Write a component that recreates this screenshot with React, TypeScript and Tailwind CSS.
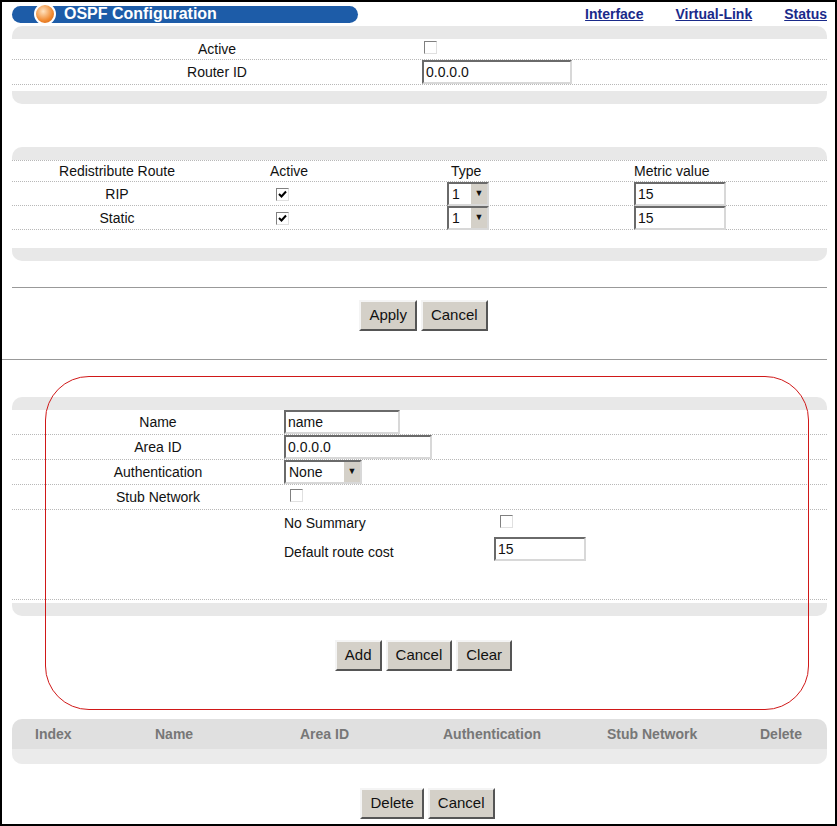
import React from "react";

const dot = "border-b border-dotted border-[#b8b8b8]";

function Check({ on }: { on?: boolean }) {
  return (
    <span className="inline-flex w-[13px] h-[13px] items-center justify-center border border-[#808080] border-r-[#e0e0e0] border-b-[#e0e0e0] bg-white">
      {on ? (
        <svg width="9" height="9" viewBox="0 0 9 9">
          <path d="M1 4 L3.5 6.5 L8 1.5" stroke="#000" strokeWidth="2" fill="none" />
        </svg>
      ) : null}
    </span>
  );
}

function Input({ value, w }: { value: string; w: string }) {
  return (
    <span className={`inline-flex h-[24px] items-center px-[2px] border-2 border-[#6a6a6a] border-r-[#d8d8d8] border-b-[#d8d8d8] bg-white text-[14px] ${w}`}>
      {value}
    </span>
  );
}

function Select({ value, w }: { value: string; w: string }) {
  return (
    <span className={`inline-flex h-[24px] items-center border-2 border-[#6a6a6a] border-r-[#d8d8d8] border-b-[#d8d8d8] bg-white text-[14px] ${w}`}>
      <span className="flex-1 px-[3px]">{value}</span>
      <span className="w-[17px] h-full flex items-center justify-center bg-[#d4d0c8] border-l border-[#fff] text-[9px]">▼</span>
    </span>
  );
}

function Btn({ label }: { label: string }) {
  return (
    <span className="inline-flex h-[31px] items-center px-[8px] bg-[#d4d0c8] border-2 border-[#f4f4f4] border-r-[#555] border-b-[#555] text-[15px]">
      {label}
    </span>
  );
}

function Band({ top }: { top?: boolean }) {
  return <div className={`h-[13px] bg-[#e8e8e8] ${top ? "rounded-t-[10px]" : "rounded-b-[10px]"}`} />;
}

export default function App() {
  return (
    <div className="w-[837px] h-[826px] border-2 border-black bg-white relative text-[14px] text-[#111]" style={{ fontFamily: "'Liberation Sans', Arial, sans-serif" }}>
      {/* title bar */}
      <div className="flex items-center h-[24px] pl-[10px] pr-[8px]">
        <div className="w-[346px] h-[17px] rounded-full bg-[#1d5ca8] flex items-center pl-[22px] gap-[8px]">
          <span className="w-[22px] h-[22px] rounded-full bg-[radial-gradient(circle_at_40%_35%,#ffe3c0,#f0882e_60%,#c85a10)] border-2 border-white" />
          <span className="text-white font-bold text-[16px]">OSPF Configuration</span>
        </div>
        <div className="flex-1 flex justify-end gap-[24px] font-bold text-[14px] text-[#1a2a8a] underline">
          <span className="mr-[8px]">Interface</span>
          <span className="mr-[8px]">Virtual-Link</span>
          <span>Status</span>
        </div>
      </div>

      <div className="pl-[10px] pr-[8px]">
        <Band top />
        <div className={`grid grid-cols-[410px_1fr] h-[21px] items-center ${dot}`}>
          <span className="text-center">Active</span>
          <span className="pl-[2px]"><Check /></span>
        </div>
        <div className={`grid grid-cols-[410px_1fr] h-[25px] items-center ${dot}`}>
          <span className="text-center">Router ID</span>
          <span><Input value="0.0.0.0" w="w-[150px]" /></span>
        </div>
        <div className="h-[6px]" />
        <Band />

        <div className="h-[43px]" />
        <Band top />
        <div className={`grid grid-cols-[210px_125px_235px_1fr] h-[22px] items-center border-t border-dotted border-[#b8b8b8] ${dot}`}>
          <span className="text-center">Redistribute Route</span>
          <span className="pl-[48px]">Active</span>
          <span className="pl-[104px]">Type</span>
          <span className="pl-[52px]">Metric value</span>
        </div>
        {["RIP", "Static"].map((r) => (
          <div key={r} className={`grid grid-cols-[210px_125px_235px_1fr] h-[24px] items-center ${dot}`}>
            <span className="text-center">{r}</span>
            <span className="pl-[54px]"><Check on /></span>
            <span className="pl-[100px]"><Select value="1" w="w-[42px]" /></span>
            <span className="pl-[52px]"><Input value="15" w="w-[92px]" /></span>
          </div>
        ))}
        <div className="h-[18px]" />
        <Band />
      </div>

      <div className="h-[26px]" />
      <div className="ml-[10px] mr-[8px] border-t border-[#999]" />
      <div className="flex justify-center gap-[4px] pl-[10px] mt-[12px]">
        <Btn label="Apply" />
        <Btn label="Cancel" />
      </div>
      <div className="h-[28px]" />
      <div className="mr-[8px] border-t border-[#999]" />

      <div className="h-[37px]" />
      <div className="pl-[10px] pr-[8px]">
        <Band top />
        {[
          ["Name", <Input value="name" w="w-[116px]" />],
          ["Area ID", <Input value="0.0.0.0" w="w-[148px]" />],
          ["Authentication", <Select value="None" w="w-[78px]" />],
          ["Stub Network", <Check />],
        ].map(([l, c], i) => (
          <div key={i} className={`grid grid-cols-[272px_1fr] h-[25px] items-center ${dot}`}>
            <span className="text-center pl-[20px]">{l}</span>
            <span className={i === 3 ? "pl-[6px]" : ""}>{c}</span>
          </div>
        ))}
        <div className="grid grid-cols-[272px_210px_1fr] h-[27px] items-center">
          <span />
          <span>No Summary</span>
          <span className="pl-[6px]"><Check /></span>
        </div>
        <div className={`grid grid-cols-[272px_210px_1fr] h-[63px] items-start ${dot}`}>
          <span />
          <span className="pt-[5px]">Default route cost</span>
          <span><Input value="15" w="w-[92px]" /></span>
        </div>
        <div className="h-[3px]" />
        <Band />
      </div>
      <div className="flex justify-center gap-[4px] pl-[10px] mt-[24px]">
        <Btn label="Add" />
        <Btn label="Cancel" />
        <Btn label="Clear" />
      </div>

      <div className="h-[48px]" />
      <div className="ml-[10px] mr-[8px]">
        <div className="h-[30px] rounded-t-[10px] bg-[#e0e0e0] grid grid-cols-[120px_145px_143px_164px_153px_1fr] pl-[23px] items-center font-bold text-[14px] text-[#777]">
          <span>Index</span>
          <span>Name</span>
          <span>Area ID</span>
          <span>Authentication</span>
          <span>Stub Network</span>
          <span>Delete</span>
        </div>
        <div className="h-[15px] rounded-b-[10px] bg-[#ebebeb]" />
      </div>
      <div className="flex justify-center gap-[4px] pl-[18px] mt-[24px]">
        <Btn label="Delete" />
        <Btn label="Cancel" />
      </div>

      {/* highlight annotation */}
      <div className="absolute left-[43px] top-[374px] w-[764px] h-[334px] border border-[#d01818] rounded-[44px] pointer-events-none" />
    </div>
  );
}
